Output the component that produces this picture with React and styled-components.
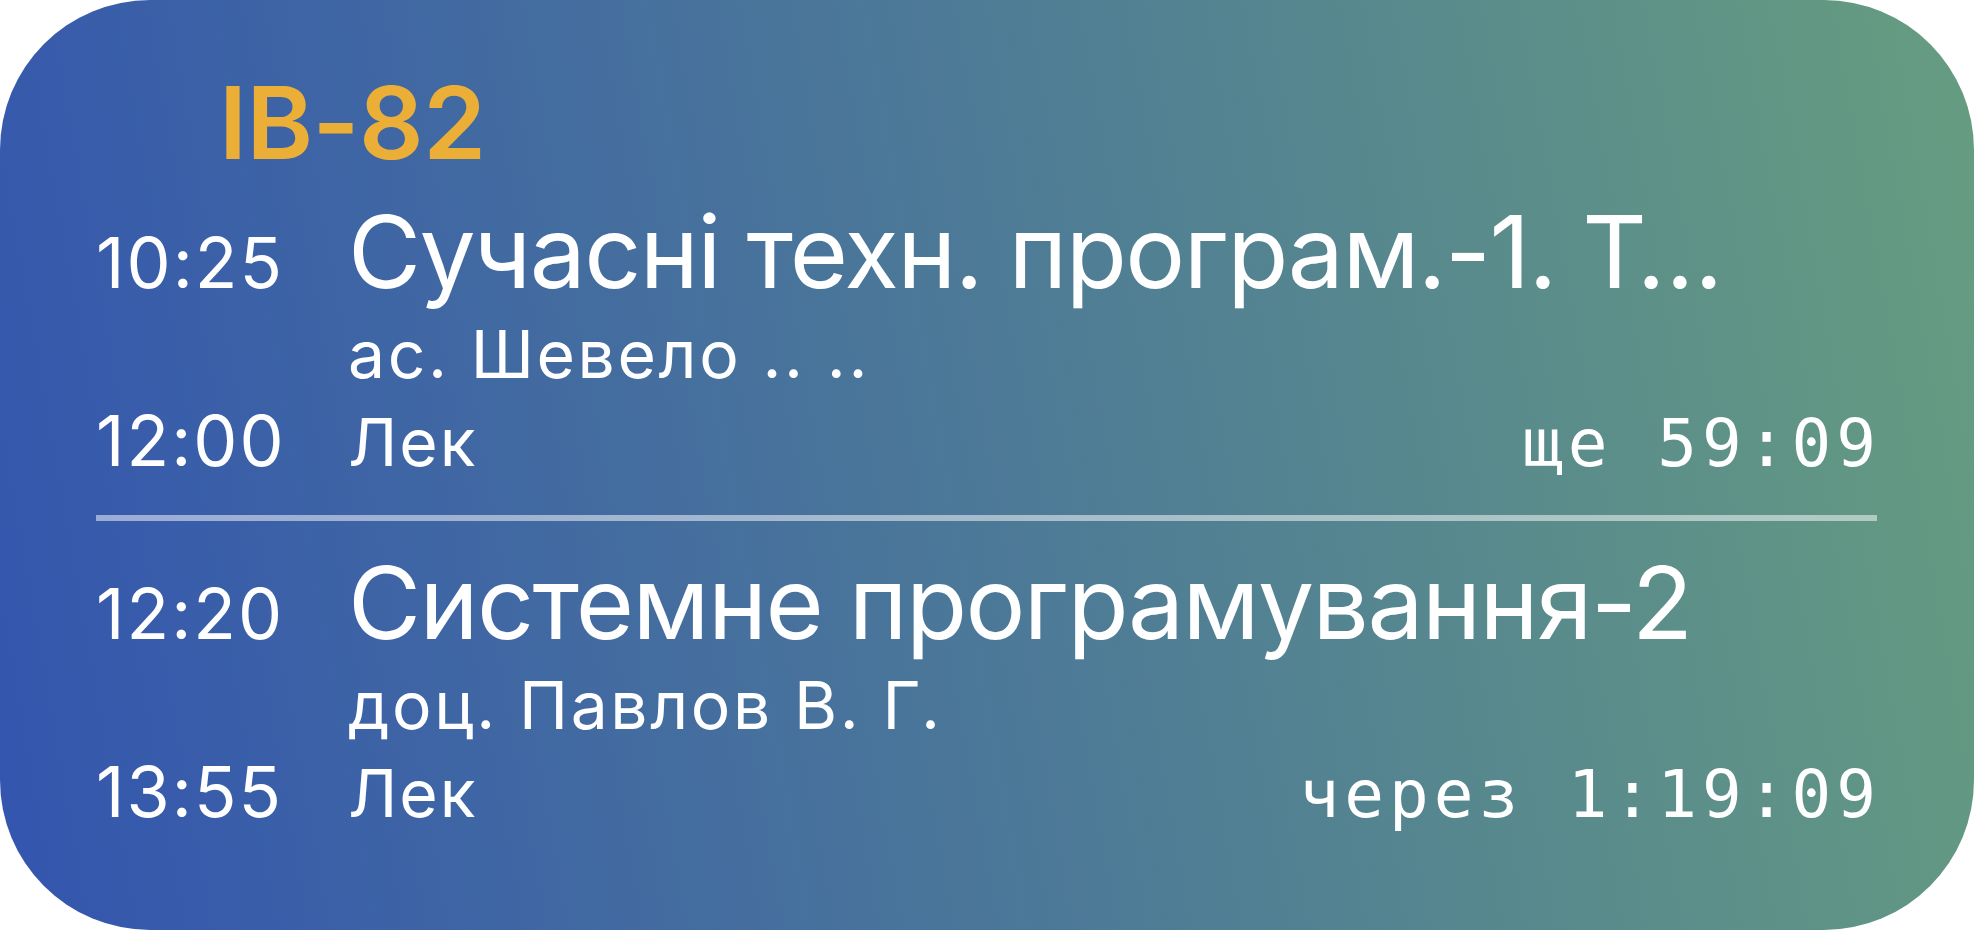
import React from "react";
import styled, { createGlobalStyle } from "styled-components";

const GlobalStyle = createGlobalStyle`
  html, body {
    margin: 0;
    padding: 0;
    background: #ffffff;
  }
  body {
    font-family: Inter, "Noto Sans", "DejaVu Sans", sans-serif;
    -webkit-font-smoothing: antialiased;
  }
`;

const Widget = styled.div`
  box-sizing: border-box;
  width: 1974px;
  height: 930px;
  border-radius: 150px;
  overflow: hidden;
  background: linear-gradient(80deg, #3355af 0%, #669d80 100%);
  padding: 60px 97px 0 96px;
  display: flex;
  flex-direction: column;
  color: #ffffff;
`;

const GroupTitle = styled.div`
  font-family: Inter, "Noto Sans", sans-serif;
  font-weight: 600;
  font-size: 101px;
  line-height: 124px;
  letter-spacing: -0.5px;
  color: #ebaf38;
  padding-left: 123px;
  margin-bottom: 12px;
`;

const Lesson = styled.div`
  display: grid;
  grid-template-columns: 252px minmax(0, 1fr);
  align-items: baseline;
`;

const Time = styled.div`
  font-family: Inter, "Noto Sans", sans-serif;
  font-size: 70px;
  line-height: ${(p) => (p.$end ? "82px" : "90px")};
  letter-spacing: 2px;
  white-space: nowrap;
`;

const Subject = styled.div`
  font-family: Inter, "Noto Sans", sans-serif;
  font-size: 100px;
  line-height: 112px;
  letter-spacing: -1.6px;
  white-space: nowrap;
`;

const Teacher = styled.div`
  grid-column: 2;
  font-family: Inter, "Noto Sans", sans-serif;
  font-size: 66px;
  line-height: 92px;
  letter-spacing: 2.6px;
  white-space: nowrap;
`;

const InfoRow = styled.div`
  display: flex;
  align-items: baseline;
  justify-content: space-between;
`;

const Kind = styled.span`
  font-family: Inter, "Noto Sans", sans-serif;
  font-size: 66px;
  line-height: 82px;
  letter-spacing: 2px;
`;

const Countdown = styled.span`
  font-family: "DejaVu Sans Mono", "Liberation Mono", monospace;
  font-size: 66px;
  line-height: 82px;
  letter-spacing: 5px;
  margin-right: -4px;
  white-space: pre;
`;

const Divider = styled.div`
  height: 6px;
  background: rgba(255, 255, 255, 0.5);
  margin: 30px 0 26px;
`;

const lessons = [
  {
    start: "10:25",
    end: "12:00",
    title: "Сучасні техн. програм.-1. Т…",
    teacher: "ас. Шевело .. ..",
    kind: "Лек",
    countdown: "ще 59:09",
  },
  {
    start: "12:20",
    end: "13:55",
    title: "Системне програмування-2",
    teacher: "доц. Павлов В. Г.",
    kind: "Лек",
    countdown: "через 1:19:09",
  },
];

function LessonBlock({ lesson }) {
  return (
    <Lesson>
      <Time>{lesson.start}</Time>
      <Subject>{lesson.title}</Subject>
      <Teacher>{lesson.teacher}</Teacher>
      <Time $end>{lesson.end}</Time>
      <InfoRow>
        <Kind>{lesson.kind}</Kind>
        <Countdown>{lesson.countdown}</Countdown>
      </InfoRow>
    </Lesson>
  );
}

export default function App() {
  return (
    <>
      <GlobalStyle />
      <Widget>
        <GroupTitle>IB-82</GroupTitle>
        <LessonBlock lesson={lessons[0]} />
        <Divider />
        <LessonBlock lesson={lessons[1]} />
      </Widget>
    </>
  );
}
